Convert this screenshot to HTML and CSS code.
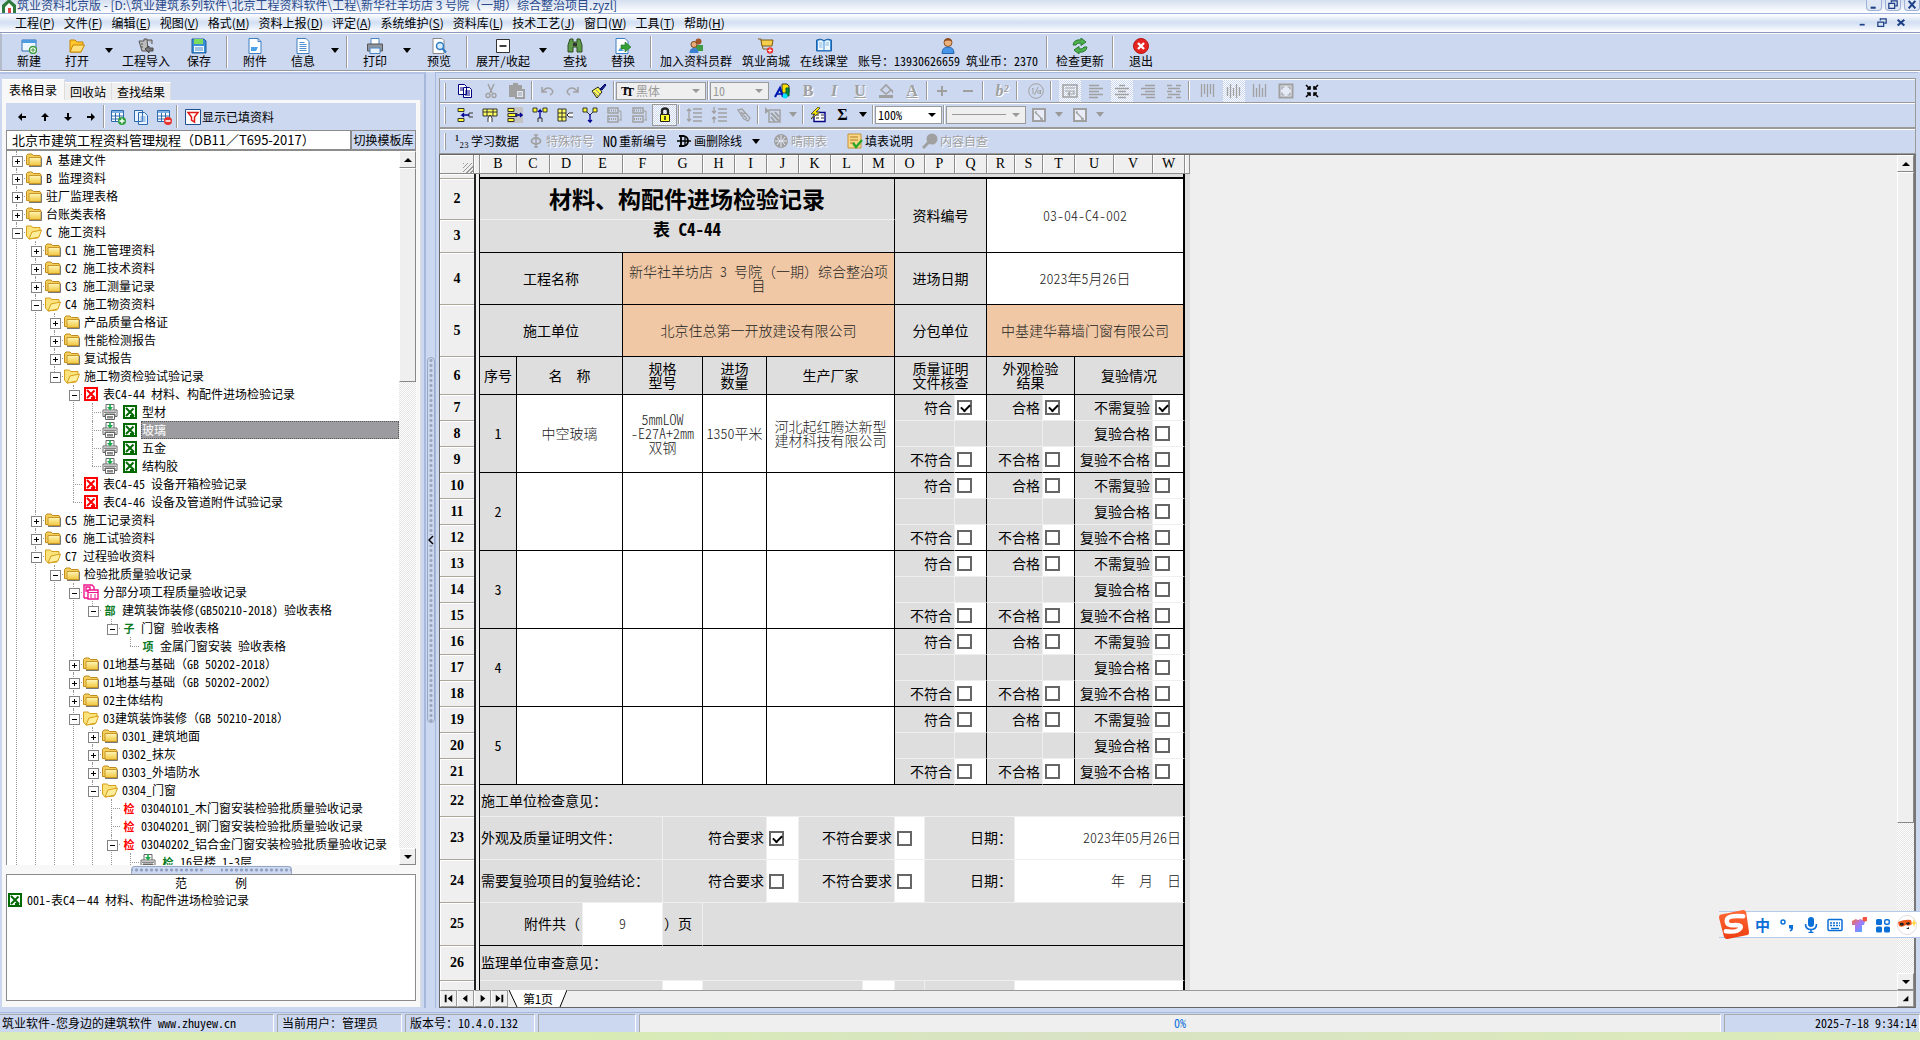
FILE: index.html
```html
<!DOCTYPE html>
<html lang="zh-CN">
<head>
    <meta charset="UTF-8">
    <meta name="viewport" content="width=device-width, initial-scale=1.0">
    <title>筑业资料北京版</title>
    <link rel="stylesheet" href="styles.css">
</head>
<body>

<!-- icon sprite -->
<svg class="sprite" aria-hidden="true">
    <defs>
        <linearGradient id="gold" x1="0" y1="0" x2="0" y2="1"><stop offset="0" stop-color="#fff6b8"/><stop offset="1" stop-color="#f0c63c"/></linearGradient>
        <linearGradient id="shirt" x1="0" y1="0" x2="1" y2="1"><stop offset="0" stop-color="#ff6a3c"/><stop offset=".5" stop-color="#a07bff"/><stop offset="1" stop-color="#38b6ff"/></linearGradient>
        <linearGradient id="sogou" x1="0" y1="0" x2="0" y2="1"><stop offset="0" stop-color="#ff6b35"/><stop offset="1" stop-color="#ee3f12"/></linearGradient>
    </defs>
    <symbol id="folder" viewBox="0 0 16 16"><path d="M.5 12.500V3.500L2 2h4l1.500 1.500H14l1 1.500v8z" fill="#f3cf5c" stroke="#c08a1c"/><path d="M3 5.500h12V13.500H3z" fill="url(#gold)" stroke="#c9962a"/><path d="M3 14.500h12.500V6" fill="none" stroke="#777"/></symbol>
    <symbol id="open" viewBox="0 0 16 16"><path d="M.5 2h5l1 1.500H14v3L12 14 3 15 .5 12z" fill="#fbe27a" stroke="#d6a01c"/><path d="M3 15L6 8l9.500-2L13 13z" fill="#ffef9c" stroke="#d6a01c"/></symbol>
    <symbol id="xred" viewBox="0 0 16 16"><path fill="#f00" d="M1 1h14v14H1z"/><path fill="#fff" d="M3 3h10v10H3z"/><path d="M4 4l8 8M11.500 4.500L4 12M8 12h4" stroke="#f00" stroke-width="2"/></symbol>
    <symbol id="xgreen" viewBox="0 0 16 16"><path fill="#006a00" d="M1 1h14v14H1z"/><path fill="#fff" d="M3 3h10v10H3z"/><path d="M4 4l8 8M11.500 4.500L4 12M8 12h4" stroke="#006a00" stroke-width="2"/></symbol>
    <symbol id="prn" viewBox="0 0 16 16"><path d="M4 6V.5h8V6M1 6h14v6.500h-2V10H3v2.500H1zM3.500 10.500h9v5h-9z" fill="#fff" stroke="#666"/><path d="M2 7.500h12V9H2zM5 12h6v2.500H5z" fill="#888"/><path d="M7.200 0h1.600v3H11L8 6.500 5 3h2.200z" fill="#1cab4c"/></symbol>
    <symbol id="pink" viewBox="0 0 16 16"><path d="M1 14V1h8l2 2v3M1 14h4M3 3h4v4H3z" fill="none" stroke="#f0148c" stroke-width="1.400"/><path d="M5 6h10v9H5z" fill="#fff" stroke="#f0148c" stroke-width="1.400"/><path d="M5 8.500h10M7 11h2M11 11h2M7 13h2M11 13h2" stroke="#f0148c"/></symbol>

    <symbol id="new" viewBox="0 0 16 16"><path d="M1 2h14v11H1z" fill="#eef6ff" stroke="#2f6fb5"/><path d="M1 2h14v3H1z" fill="#4d9be0"/><circle cx="12" cy="12" r="3.500" fill="#fff" stroke="#3c9a3c" stroke-width="1.500"/><path d="M12 10v4M10 12h4" stroke="#3c9a3c"/></symbol>
    <symbol id="openbig" viewBox="0 0 16 16"><path d="M1 2h5l2 2h6v3l-2 7H1z" fill="#ffc62e" stroke="#c78500"/><path d="M1 14l3-7h11.500L12 14z" fill="#ffe07a" stroke="#c78500"/></symbol>
    <symbol id="import" viewBox="0 0 16 16"><path d="M1 3h5V1h3l1 12H4zM9 2h5v4M3 6h2M3 9h2" fill="#bbb" stroke="#555"/><path d="M7 11l4-3v2h4v3h-4v2z" fill="#777" stroke="#444"/></symbol>
    <symbol id="save" viewBox="0 0 16 16"><path d="M1 1h12l2 2v12H1z" fill="#3a8fd8" stroke="#1d5fa0"/><path d="M3 1h9v5H3z" fill="#7fdc5a"/><path d="M3 8h10v6H3z" fill="#f4f8ff"/><path d="M4 10h8M4 12h8" stroke="#4a8ccc"/></symbol>
    <symbol id="doc" viewBox="0 0 16 16"><path d="M2 .5h9l3 3v12H2z" fill="#fff" stroke="#3f7fc1"/><path d="M11 .5v3h3" fill="none" stroke="#3f7fc1"/><path d="M4 9h7l-2 4H4z" fill="#4aa1e8"/></symbol>
    <symbol id="info" viewBox="0 0 16 16"><path d="M2 .5h9l3 3v12H2z" fill="#fff" stroke="#3f7fc1"/><path d="M4.500 4.500h5M4.500 6.500h7M4.500 8.500h7M4.500 10.500h7M4.500 12.500h7" stroke="#4d8fd0"/></symbol>
    <symbol id="print" viewBox="0 0 16 16"><path d="M4 6V.5h8V6" fill="#fff" stroke="#4a86c5"/><path d="M.5 6h15v7H.5z" fill="#8f959c" stroke="#555"/><path d="M3 10h10v5.500H3z" fill="#e8f2fc" stroke="#4a86c5"/></symbol>
    <symbol id="preview" viewBox="0 0 16 16"><path d="M2 .5h9l2 2v13H2z" fill="#fff" stroke="#888"/><circle cx="9" cy="8" r="3.500" fill="#d8ecff" stroke="#2f7cc4" stroke-width="1.500"/><path d="M11.500 10.500l3.500 4" stroke="#2f7cc4" stroke-width="2"/></symbol>
    <symbol id="fold" viewBox="0 0 16 16"><path d="M1.500 1.500h13v13h-13z" fill="#fff" stroke="#333"/><path d="M4.500 8h7" stroke="#000" stroke-width="1.500"/></symbol>
    <symbol id="find" viewBox="0 0 16 16"><path d="M3 1h3v3h4V1h3l2 6v7h-5V9H6v5H1V7z" fill="#5f9a4a" stroke="#2f4f25"/><path d="M6 5h4v3H6z" fill="#333"/></symbol>
    <symbol id="replace" viewBox="0 0 16 16"><path d="M1 .5h9l3 3v12H1z" fill="#fff" stroke="#3f7fc1"/><path d="M3 13l2-3 4 3z" fill="#4aa1e8"/><path d="M6 7h4V4l6 5-6 5v-3H6z" fill="#35a035" stroke="#1c6e1c" stroke-width=".6"/></symbol>
    <symbol id="group" viewBox="0 0 16 16"><circle cx="10.500" cy="3.500" r="3" fill="#a5552a"/><path d="M7 7h8v6H8z" fill="#3f9c46"/><circle cx="6" cy="6.500" r="3" fill="#e9ab78" stroke="#7a451c"/><path d="M1.500 15q0-5 4.500-5t4.500 5z" fill="#3a7fd0"/></symbol>
    <symbol id="shop" viewBox="0 0 16 16"><path d="M0 1h3l2 10h8" fill="none" stroke="#7c5a14"/><path d="M3 2h12l-1 6H4z" fill="#f6cf4a" stroke="#7c5a14"/><circle cx="12" cy="12.500" r="3.200" fill="#e33"/><path d="M12 10.700v3.600M10.200 12.500h3.600" stroke="#fff"/></symbol>
    <symbol id="book" viewBox="0 0 16 16"><path d="M.5 2q4-2 7.500.5Q12 0 15.500 2v11H.5z" fill="#3f90dc" stroke="#1f62a6"/><path d="M2 3q3-1.500 5.500.5V12H2zM8.500 3.500Q11 1.500 14 3v9H8.500z" fill="#eef7ff"/><path d="M3 5h3.500M3 7h3.500M3 9h3.500M9.500 5H13M9.500 7H13" stroke="#8bb8e0"/></symbol>
    <symbol id="user" viewBox="0 0 16 16"><circle cx="8" cy="4.500" r="4" fill="#edb27c" stroke="#8a4d1e"/><path d="M4 3.500q1-3 4-3t4 3q-4-2-8 0z" fill="#8a4d1e"/><path d="M2 15.500Q2 9 8 9t6 6.500z" fill="#4795e8" stroke="#2465ac"/></symbol>
    <symbol id="refresh" viewBox="0 0 16 16"><path d="M1 7q1-6 8-5V0l5 4-5 3.500V5Q5 4.500 4 7z" fill="#4fb050" stroke="#267a2b"/><path d="M15 9q-1 6-8 5v2l-5-4 5-3.500V11q4 .5 5-2z" fill="#4fb050" stroke="#267a2b"/></symbol>
    <symbol id="exit" viewBox="0 0 16 16"><circle cx="8" cy="8" r="7.500" fill="#e5231f" stroke="#b51512"/><path d="M5 5l6 6M11 5l-6 6" stroke="#fff" stroke-width="2.400"/></symbol>

    <symbol id="left" viewBox="0 0 16 16"><path d="M4 8l4-4v3h4v2H8v3z"/></symbol>
    <symbol id="up" viewBox="0 0 16 16"><path d="M8 4l4 4H9v4H7V8H4z"/></symbol>
    <symbol id="down" viewBox="0 0 16 16"><path d="M8 12l4-4H9V4H7v4H4z"/></symbol>
    <symbol id="right" viewBox="0 0 16 16"><path d="M12 8L8 4v3H4v2h4v3z"/></symbol>
    <symbol id="tadd" viewBox="0 0 16 16"><path d="M1.500 1.500h12v11h-12z" fill="#fff" stroke="#2c6ab0"/><path d="M2 2h11v2H2z" fill="#7eb0e4"/><path d="M2 7h11M2 10h11M5.500 4v8M9.500 4v8" stroke="#2c6ab0"/><circle cx="12" cy="12" r="4" fill="#2e9d3c"/><path d="M12 9.500v5M9.500 12h5" stroke="#fff" stroke-width="1.400"/></symbol>
    <symbol id="tdel" viewBox="0 0 16 16"><path d="M1.500 1.500h12v11h-12z" fill="#fff" stroke="#2c6ab0"/><path d="M2 2h11v2H2z" fill="#7eb0e4"/><path d="M2 7h11M2 10h11M5.500 4v8M9.500 4v8" stroke="#2c6ab0"/><circle cx="12" cy="12" r="4" fill="#e8332c"/><path d="M9.500 12h5" stroke="#fff" stroke-width="1.600"/></symbol>
    <symbol id="tcopy" viewBox="0 0 16 16"><path d="M1.500 1.500h8v11h-8zM5.500 3.500h6l3 3v9h-9z" fill="#eaf3ff" stroke="#2c6ab0"/><path d="M7.500 8h5M7.500 10h5M7.500 12h5" stroke="#5c94d2"/></symbol>
    <symbol id="filter" viewBox="0 0 16 16"><path d="M.5.500h15v15H.5z" fill="#fff" stroke="#1d4f8f"/><path d="M3 3.500h10L9.500 8v5l-3-2V8z" fill="#fff" stroke="#e01818" stroke-width="1.500"/></symbol>

    <symbol id="copy" viewBox="0 0 16 16"><path d="M1.500 1.500h6l2 2v8h-8zM6.500 4.500h6l2 2v8h-8z" fill="#fff" stroke="#000080"/><path d="M3 5h3M3 7h3M8 8h5M8 10h5M8 12h5" stroke="#000080"/></symbol>
    <symbol id="cut" viewBox="0 0 16 16"><path d="M5 1l4 9M11 1L7 10" stroke="currentColor" stroke-width="1.500"/><circle cx="5" cy="12.500" r="2" fill="none" stroke="currentColor" stroke-width="1.300"/><circle cx="11" cy="12.500" r="2" fill="none" stroke="currentColor" stroke-width="1.300"/></symbol>
    <symbol id="paste" viewBox="0 0 16 16"><path d="M0 2h4V0h5v2h4v4h3v10H6v-2H0z" fill="currentColor"/><path d="M8 8h6v6H8z" fill="#dfe6f4"/><path d="M9 10h4M9 12h4" stroke="currentColor"/></symbol>
    <symbol id="undo" viewBox="0 0 16 16"><path d="M3 4v5h5M3 9q5-6 9-3t-1 6" fill="none" stroke="currentColor" stroke-width="1.500"/></symbol>
    <symbol id="redo" viewBox="0 0 16 16"><path d="M13 4v5H8M13 9Q8 3 4 6t1 6" fill="none" stroke="currentColor" stroke-width="1.500"/></symbol>
    <symbol id="brush" viewBox="0 0 16 16"><path d="M1 8l6-4 4 5-5 6z" fill="#ffff50" stroke="#222"/><path d="M3 9l4 4M5 7l4 4" stroke="#888"/><path d="M9 6l5-5 1 1-4 5z" fill="#1b2a90" stroke="#000060"/></symbol>
    <symbol id="color" viewBox="0 0 16 16"><path d="M8 1h5l2 2v7H8z" fill="#ffe000" stroke="#333"/><path d="M12 5h3v8h-3z" fill="#0a8a3a" stroke="#063"/><path d="M1 14L6 5l3 9" fill="none" stroke="#0018b0" stroke-width="2.200"/><path d="M3 11h5" stroke="#0018b0" stroke-width="1.600"/><circle cx="11" cy="13" r="2.500" fill="#00e0ff"/></symbol>
    <symbol id="fill" viewBox="0 0 16 16"><path d="M3 7l5-5 5 5-5 4z" fill="none" stroke="currentColor" stroke-width="1.600"/><path d="M1 12h14v3H1zM12 6l3 1v4z" fill="currentColor"/></symbol>
    <symbol id="plus" viewBox="0 0 16 16"><path d="M8 3v10M3 8h10" stroke="currentColor" stroke-width="2"/></symbol>
    <symbol id="minus" viewBox="0 0 16 16"><path d="M3 8h10" stroke="currentColor" stroke-width="2"/></symbol>
    <symbol id="frac" viewBox="0 0 16 16"><circle cx="8" cy="8" r="7.300" fill="none" stroke="currentColor"/><path d="M4 6l1-1v6M10 4L6.500 12M12.500 7v4M12.500 8q-3-1-3 1t3 1" fill="none" stroke="currentColor"/></symbol>
    <symbol id="wrap" viewBox="0 0 16 16"><path d="M1 2h14v12H1z" fill="none" stroke="currentColor" stroke-width="1.500"/><path d="M3 5h10M3 8h9v3H7M8 9l-2 2 2 2" fill="none" stroke="currentColor" stroke-width="1.200"/></symbol>
    <symbol id="al" viewBox="0 0 16 16"><path d="M1 2.500h10M1 5.500h14M1 8.500h10M1 11.500h14M1 14.500h9" stroke="currentColor" stroke-width="1.500"/></symbol>
    <symbol id="ac" viewBox="0 0 16 16"><path d="M5 2.500h6M1 5.500h14M4 8.500h8M1 11.500h14M4 14.500h8" stroke="currentColor" stroke-width="1.500"/></symbol>
    <symbol id="ar" viewBox="0 0 16 16"><path d="M5 2.500h10M1 5.500h14M5 8.500h10M1 11.500h14M6 14.500h9" stroke="currentColor" stroke-width="1.500"/></symbol>
    <symbol id="aj" viewBox="0 0 16 16"><path d="M1 2.500h5M10 2.500h5M2 5.500h12M1 8.500h5M10 8.500h5M2 11.500h12M1 14.500h5M10 14.500h5" stroke="currentColor" stroke-width="1.500"/></symbol>
    <symbol id="vt" viewBox="0 0 16 16"><path d="M1.500 1v13M4.500 1v10M7.500 1v13M10.500 1v10M13.500 1v13" stroke="currentColor" stroke-width="1.300"/></symbol>
    <symbol id="vm" viewBox="0 0 16 16"><path d="M1.500 4v9M4.500 1v14M7.500 5v8M10.500 1v14M13.500 4v9" stroke="currentColor" stroke-width="1.300"/></symbol>
    <symbol id="vb" viewBox="0 0 16 16"><path d="M1.500 1v13M4.500 5v9M7.500 1v13M10.500 5v9M13.500 1v13" stroke="currentColor" stroke-width="1.300"/></symbol>
    <symbol id="expand" viewBox="0 0 16 16"><path d="M1.500 1.500h13v13h-13z" fill="#e4eaf6" stroke="currentColor" stroke-width="2"/><path d="M4 6.500V4h2.500M9.500 4H12v2.500M12 9.500V12H9.500M6.500 12H4V9.500" fill="none" stroke="currentColor" stroke-width="1.200"/></symbol>
    <symbol id="shrink" viewBox="0 0 16 16"><path d="M2 2l4 4M14 2l-4 4M2 14l4-4M14 14l-4-4M6 3v3H3M10 3v3h3M6 13v-3H3M10 13v-3h3" fill="none" stroke="#000" stroke-width="1.600"/></symbol>

    <symbol id="ins1" viewBox="0 0 16 16"><path d="M1 1.500h6v3H1zM1 11.500h6v3H1z" fill="#ffff30" stroke="#333"/><path d="M16 6h-4v4h4" fill="none" stroke="#333"/><path d="M12 8H5l2-2M5 8l2 2" fill="none" stroke="#000090" stroke-width="1.300"/></symbol>
    <symbol id="ins2" viewBox="0 0 16 16"><path d="M1 2h14v7H1z" fill="#ffff60" stroke="#333"/><path d="M1 5h14M5 2v7M11 2v7" stroke="#333"/><path d="M6 15v-4l2-3 2 3v4" fill="#fff" stroke="#333"/></symbol>
    <symbol id="ins3" viewBox="0 0 16 16"><path d="M1 1.500h6v3H1zM1 11.500h6v3H1zM1 6.500h9v3H1z" fill="#ffff30" stroke="#333"/><path d="M8 8h7l-2-2M15 8l-2 2" fill="none" stroke="#000090" stroke-width="1.300"/></symbol>
    <symbol id="ins4" viewBox="0 0 16 16"><path d="M1 1h4v4H1zM11 1h4v4h-4z" fill="#ffff30" stroke="#333"/><path d="M6 15v-4h4v4" fill="none" stroke="#333"/><path d="M8 11V3L6 5M8 3l2 2" fill="none" stroke="#000090" stroke-width="1.300"/></symbol>
    <symbol id="ins5" viewBox="0 0 16 16"><path d="M1 2h8v12H1z" fill="#ffff60" stroke="#333"/><path d="M5 2v12M1 6h8M1 10h8" stroke="#333"/><path d="M16 6h-4l-2 2 2 2h4" fill="#fff" stroke="#333"/></symbol>
    <symbol id="ins6" viewBox="0 0 16 16"><path d="M1 1h4v4H1zM11 1h4v4h-4z" fill="#ffff30" stroke="#333"/><path d="M5 5l3 3 3-3" fill="none" stroke="#333"/><path d="M8 7v8l-2-2M8 15l2-2" fill="none" stroke="#000090" stroke-width="1.300"/></symbol>
    <symbol id="blk" viewBox="0 0 16 16"><path d="M1 1h10v5H1zM1 9h10v6H1z" fill="none" stroke="currentColor" stroke-width="1.500"/><path d="M2 3.500h8M2 12h8" stroke="currentColor" stroke-width="2" stroke-dasharray="1 1"/><path d="M12 4h2v9M12 13h3" fill="none" stroke="currentColor"/></symbol>
    <symbol id="lock" viewBox="0 0 16 16"><path d="M5 7V4q0-2.500 3-2.500T11 4v3" fill="none" stroke="#222" stroke-width="2.400"/><path d="M3.500 7.500h9v7h-9z" fill="#ffff30" stroke="#222"/><path d="M8 9v4" stroke="#222" stroke-width="1.600"/></symbol>
    <symbol id="lines" viewBox="0 0 16 16"><path d="M7 2h9M7 6h9M7 10h9M7 14h9M3 2v12M1 4l2-2 2 2M1 12l2 2 2-2" fill="none" stroke="currentColor" stroke-width="1.300"/></symbol>
    <symbol id="lines2" viewBox="0 0 16 16"><path d="M7 2h9M7 6h9M7 10h9M7 14h9M3 0v6M3 16v-6M1 4l2 2 2-2M1 12l2-2 2 2" fill="none" stroke="currentColor" stroke-width="1.300"/></symbol>
    <symbol id="chain" viewBox="0 0 16 16"><path d="M2 3l4-1 8 9-2 3-4-2zM5 5l6 7M9 5l-4 4" fill="none" stroke="currentColor" stroke-width="1.300"/></symbol>
    <symbol id="grad" viewBox="0 0 16 16"><path d="M0 0l4 4-4 3z" fill="currentColor"/><path d="M4 3h11v12H4z" fill="none" stroke="currentColor" stroke-width="1.500"/><path d="M6 6l8 8M10 5l4 5M6 10l4 5" stroke="currentColor" stroke-width="2"/></symbol>
    <symbol id="calc" viewBox="0 0 16 16"><path d="M4 5.500h11v9H4z" fill="#fff" stroke="#000080" stroke-width="1.400"/><path d="M6 8h3M6 11h3M11 8h3M11 11h3" stroke="#333"/><path d="M8 0L1 7h4l-4 5 9-7H6l4-4z" fill="#ffe800" stroke="#333" stroke-width=".8"/></symbol>
    <symbol id="cellb" viewBox="0 0 16 16"><path d="M2 2h12v12H2z" fill="#e8edf7" stroke="currentColor" stroke-width="2"/><path d="M4 5l7 7M9 12h3M5 4v3" stroke="currentColor" stroke-width="1.300"/></symbol>
    <symbol id="phi" viewBox="0 0 16 16"><path d="M8 2v12M6 2h4M6 14h4" stroke="currentColor" stroke-width="1.500"/><ellipse cx="8" cy="8" rx="4.500" ry="3" fill="none" stroke="currentColor" stroke-width="1.800"/></symbol>
    <symbol id="strike" viewBox="0 0 16 16"><path d="M5 3v10M3 3h5q4 1 4 5t-4 5H3" fill="none" stroke="#000" stroke-width="1.800"/><path d="M1 8h14M9 4v8" stroke="#000" stroke-width="1.300"/></symbol>
    <symbol id="globe" viewBox="0 0 16 16"><circle cx="8" cy="8" r="7" fill="currentColor"/><path d="M4 4l3 4-3 4M12 4L9 8l3 4M8 2v12M2 8h12" fill="none" stroke="#e6ecf8"/></symbol>
    <symbol id="note" viewBox="0 0 16 16"><path d="M1 1h13v14H1z" fill="#fbd98a" stroke="#c39237"/><path d="M3 4h8M3 7h8M3 10h5" stroke="#b07a1c"/><path d="M6 10l3 4 6-7" fill="none" stroke="#2ba52b" stroke-width="2.400"/></symbol>
    <symbol id="mag" viewBox="0 0 16 16"><circle cx="10" cy="6" r="5.500" fill="currentColor"/><path d="M7 9l-6 6" stroke="currentColor" stroke-width="3"/></symbol>
</svg>

<header class="titlebar">
    <svg class="ic" viewBox="0 0 16 16"><path d="M1 6l7-6 7 6v9H1z" fill="#2e7a3c"/><path d="M4 8l4-4 4 4v7H4z" fill="#fff"/><path d="M7 9h3v6H7z" fill="#d44"/></svg>
    <span class="caption">筑业资料北京版 - [D:\筑业建筑系列软件\北京工程资料软件\工程\新华社羊坊店 3 号院（一期）综合整治项目.zyzl]</span>
    <div class="winbtns">
        <button aria-label="最小化"><svg viewBox="0 0 12 12"><path d="M2 8h6v2.500H2z" fill="#1d3f86"/></svg></button>
        <button aria-label="还原"><svg viewBox="0 0 12 12"><path d="M4 3V1h7v6H9M1 4h7v6H1z" fill="none" stroke="#1d3f86" stroke-width="1.500"/></svg></button>
        <button aria-label="关闭"><svg viewBox="0 0 12 12"><path d="M2 1l8 9M10 1L2 10" stroke="#1d3f86" stroke-width="2.500"/></svg></button>
    </div>
</header>

<nav class="menubar">
    <button>工程(<u>P</u>)</button>
    <button>文件(<u>F</u>)</button>
    <button>编辑(<u>E</u>)</button>
    <button>视图(<u>V</u>)</button>
    <button>格式(<u>M</u>)</button>
    <button>资料上报(<u>D</u>)</button>
    <button>评定(<u>A</u>)</button>
    <button>系统维护(<u>S</u>)</button>
    <button>资料库(<u>L</u>)</button>
    <button>技术工艺(<u>J</u>)</button>
    <button>窗口(<u>W</u>)</button>
    <button>工具(<u>T</u>)</button>
    <button>帮助(<u>H</u>)</button>
    <div class="mdibtns">
        <button aria-label="最小化"><svg viewBox="0 0 12 12"><path d="M2 7h6v2H2z" fill="#1d3f86"/></svg></button>
        <button aria-label="还原"><svg viewBox="0 0 12 12"><path d="M4 3V1h7v5H9M1 5h7v5H1z" fill="none" stroke="#1d3f86" stroke-width="1.500"/></svg></button>
        <button aria-label="关闭"><svg viewBox="0 0 12 12"><path d="M2 2l8 7M10 2L2 9" stroke="#1d3f86" stroke-width="2.500"/></svg></button>
    </div>
</nav>

<div class="maintools">
    <button><svg class="ic"><use href="#new"/></svg>新建</button>
    <button><svg class="ic"><use href="#openbig"/></svg>打开</button>
    <button class="drop" aria-label="打开列表"></button>
    <button><svg class="ic"><use href="#import"/></svg>工程导入</button>
    <button><svg class="ic"><use href="#save"/></svg>保存</button>
    <i class="sep"></i>
    <button><svg class="ic"><use href="#doc"/></svg>附件</button>
    <button><svg class="ic"><use href="#info"/></svg>信息</button>
    <button class="drop" aria-label="信息列表"></button>
    <i class="sep"></i>
    <button><svg class="ic"><use href="#print"/></svg>打印</button>
    <button class="drop" aria-label="打印列表"></button>
    <button><svg class="ic"><use href="#preview"/></svg>预览</button>
    <i class="sep"></i>
    <button><svg class="ic"><use href="#fold"/></svg>展开/收起</button>
    <button class="drop" aria-label="展开列表"></button>
    <button><svg class="ic"><use href="#find"/></svg>查找</button>
    <button><svg class="ic"><use href="#replace"/></svg>替换</button>
    <i class="sep"></i>
    <button><svg class="ic"><use href="#group"/></svg>加入资料员群</button>
    <button><svg class="ic"><use href="#shop"/></svg>筑业商城</button>
    <button><svg class="ic"><use href="#book"/></svg>在线课堂</button>
    <button><svg class="ic"><use href="#user"/></svg>账号：13930626659 筑业币：2370</button>
    <i class="sep"></i>
    <button><svg class="ic"><use href="#refresh"/></svg>检查更新</button>
    <i class="sep"></i>
    <button><svg class="ic"><use href="#exit"/></svg>退出</button>
</div>

<main class="workspace">
    <aside class="side">
        <div class="tabs">
            <button class="active">表格目录</button><button>回收站</button><button>查找结果</button>
        </div>
        <div class="page">
            <div class="sidetools">
                <button aria-label="左移"><svg class="ic"><use href="#left"/></svg></button>
                <button aria-label="上移"><svg class="ic"><use href="#up"/></svg></button>
                <button aria-label="下移"><svg class="ic"><use href="#down"/></svg></button>
                <button aria-label="右移"><svg class="ic"><use href="#right"/></svg></button>
                <i class="sep"></i>
                <button aria-label="添加表格"><svg class="ic"><use href="#tadd"/></svg></button>
                <button aria-label="复制表格"><svg class="ic"><use href="#tcopy"/></svg></button>
                <button aria-label="删除表格"><svg class="ic"><use href="#tdel"/></svg></button>
                <i class="sep"></i>
                <button class="wide"><svg class="ic"><use href="#filter"/></svg>显示已填资料</button>
            </div>
            <div class="library">
                <input type="text" aria-label="模板库" value="北京市建筑工程资料管理规程（DB11／T695-2017）" readonly>
                <button>切换模板库</button>
            </div>

            <div class="treebox">
                <ul class="tree">
                    <li class="plus"><span><svg class="ic"><use href="#folder"/></svg>A 基建文件</span></li>
                    <li class="plus"><span><svg class="ic"><use href="#folder"/></svg>B 监理资料</span></li>
                    <li class="plus"><span><svg class="ic"><use href="#folder"/></svg>驻厂监理表格</span></li>
                    <li class="plus"><span><svg class="ic"><use href="#folder"/></svg>台账类表格</span></li>
                    <li class="minus"><span><svg class="ic"><use href="#open"/></svg>C 施工资料</span>
                        <ul>
                            <li class="plus"><span><svg class="ic"><use href="#folder"/></svg>C1 施工管理资料</span></li>
                            <li class="plus"><span><svg class="ic"><use href="#folder"/></svg>C2 施工技术资料</span></li>
                            <li class="plus"><span><svg class="ic"><use href="#folder"/></svg>C3 施工测量记录</span></li>
                            <li class="minus"><span><svg class="ic"><use href="#open"/></svg>C4 施工物资资料</span>
                                <ul>
                                    <li class="plus"><span><svg class="ic"><use href="#folder"/></svg>产品质量合格证</span></li>
                                    <li class="plus"><span><svg class="ic"><use href="#folder"/></svg>性能检测报告</span></li>
                                    <li class="plus"><span><svg class="ic"><use href="#folder"/></svg>复试报告</span></li>
                                    <li class="minus end"><span><svg class="ic"><use href="#open"/></svg>施工物资检验试验记录</span>
                                        <ul>
                                            <li class="minus"><span><svg class="ic"><use href="#xred"/></svg>表C4-44 材料、构配件进场检验记录</span>
                                                <ul>
                                                    <li><span><svg class="ic"><use href="#prn"/></svg><svg class="ic"><use href="#xgreen"/></svg>型材</span></li>
                                                    <li><span><svg class="ic"><use href="#prn"/></svg><svg class="ic"><use href="#xgreen"/></svg><b class="selected">玻璃</b></span></li>
                                                    <li><span><svg class="ic"><use href="#prn"/></svg><svg class="ic"><use href="#xgreen"/></svg>五金</span></li>
                                                    <li class="end"><span><svg class="ic"><use href="#prn"/></svg><svg class="ic"><use href="#xgreen"/></svg>结构胶</span></li>
                                                </ul>
                                            </li>
                                            <li><span><svg class="ic"><use href="#xred"/></svg>表C4-45 设备开箱检验记录</span></li>
                                            <li class="end"><span><svg class="ic"><use href="#xred"/></svg>表C4-46 设备及管道附件试验记录</span></li>
                                        </ul>
                                    </li>
                                </ul>
                            </li>
                            <li class="plus"><span><svg class="ic"><use href="#folder"/></svg>C5 施工记录资料</span></li>
                            <li class="plus"><span><svg class="ic"><use href="#folder"/></svg>C6 施工试验资料</span></li>
                            <li class="minus"><span><svg class="ic"><use href="#open"/></svg>C7 过程验收资料</span>
                                <ul>
                                    <li class="minus"><span><svg class="ic"><use href="#folder"/></svg>检验批质量验收记录</span>
                                        <ul>
                                            <li class="minus"><span><svg class="ic"><use href="#pink"/></svg>分部分项工程质量验收记录</span>
                                                <ul>
                                                    <li class="minus end"><span><em>部</em>建筑装饰装修(GB50210-2018) 验收表格</span>
                                                        <ul>
                                                            <li class="minus end"><span><em>子</em>门窗 验收表格</span>
                                                                <ul>
                                                                    <li class="end"><span><em>项</em>金属门窗安装 验收表格</span></li>
                                                                </ul>
                                                            </li>
                                                        </ul>
                                                    </li>
                                                </ul>
                                            </li>
                                            <li class="plus"><span><svg class="ic"><use href="#folder"/></svg><b>01地基与基础<i class="fw">（</i>GB 50202-2018<i class="fw">）</i></b></span></li>
                                            <li class="plus"><span><svg class="ic"><use href="#folder"/></svg><b>01地基与基础<i class="fw">（</i>GB 50202-2002<i class="fw">）</i></b></span></li>
                                            <li class="plus"><span><svg class="ic"><use href="#folder"/></svg>02主体结构</span></li>
                                            <li class="minus"><span><svg class="ic"><use href="#open"/></svg><b>03建筑装饰装修<i class="fw">（</i>GB 50210-2018<i class="fw">）</i></b></span>
                                                <ul>
                                                    <li class="plus"><span><svg class="ic"><use href="#folder"/></svg>0301_建筑地面</span></li>
                                                    <li class="plus"><span><svg class="ic"><use href="#folder"/></svg>0302_抹灰</span></li>
                                                    <li class="plus"><span><svg class="ic"><use href="#folder"/></svg>0303_外墙防水</span></li>
                                                    <li class="minus"><span><svg class="ic"><use href="#open"/></svg>0304_门窗</span>
                                                        <ul>
                                                            <li><span><em class="red">检</em>03040101_木门窗安装检验批质量验收记录</span></li>
                                                            <li><span><em class="red">检</em>03040201_钢门窗安装检验批质量验收记录</span></li>
                                                            <li class="minus"><span><em class="red">检</em>03040202_铝合金门窗安装检验批质量验收记录</span>
                                                                <ul>
                                                                    <li><span><svg class="ic"><use href="#prn"/></svg><em>检</em>16号楼 1-3层</span></li>
                                                                </ul>
                                                            </li>
                                                        </ul>
                                                    </li>
                                                </ul>
                                            </li>
                                        </ul>
                                    </li>
                                </ul>
                            </li>
                        </ul>
                    </li>
                </ul>
                <div class="scroll">
                    <button class="arrow-up" aria-label="向上滚动"></button>
                    <div class="thumb tree-thumb"></div>
                    <button class="arrow-down" aria-label="向下滚动"></button>
                </div>
            </div>

            <div class="hgrip"><i></i></div>

            <div class="samples">
                <h2><span>范</span><span>例</span></h2>
                <p><svg class="ic"><use href="#xgreen"/></svg><span>001-表C4<i class="fw">－</i>44 材料、构配件进场检验记录</span></p>
            </div>
        </div>
    </aside>

    <div class="splitter"><i><svg viewBox="0 0 6 10"><path d="M5 1L1 5l4 4" fill="none" stroke="#000" stroke-width="1.500"/></svg></i></div>

    <section class="editor">
        <div class="bar first">
            <button aria-label="复制"><svg class="ic"><use href="#copy"/></svg></button>
            <button disabled aria-label="剪切"><svg class="ic"><use href="#cut"/></svg></button>
            <button disabled aria-label="粘贴"><svg class="ic"><use href="#paste"/></svg></button>
            <i class="sep"></i>
            <button disabled aria-label="撤销"><svg class="ic"><use href="#undo"/></svg></button>
            <button disabled aria-label="重做"><svg class="ic"><use href="#redo"/></svg></button>
            <button aria-label="格式刷"><svg class="ic"><use href="#brush"/></svg></button>
            <i class="sep"></i>
            <div class="combo font"><b>T</b><b class="low">T</b><select disabled aria-label="字体"><option>黑体</option></select></div>
            <i class="sep"></i>
            <div class="combo size"><select disabled aria-label="字号"><option>10</option></select></div>
            <button aria-label="颜色"><svg class="ic"><use href="#color"/></svg></button>
            <button disabled class="glyph"><b>B</b></button>
            <button disabled class="glyph"><b><em>I</em></b></button>
            <button disabled class="glyph"><b><u>U</u></b></button>
            <button disabled aria-label="填充"><svg class="ic"><use href="#fill"/></svg></button>
            <button disabled class="glyph"><b><u>A</u></b></button>
            <i class="sep"></i>
            <button disabled aria-label="增大"><svg class="ic"><use href="#plus"/></svg></button>
            <button disabled aria-label="减小"><svg class="ic"><use href="#minus"/></svg></button>
            <i class="sep big"></i>
            <button disabled class="glyph"><b><em>b²</em></b></button>
            <i class="sep big"></i>
            <button disabled aria-label="分数"><svg class="ic"><use href="#frac"/></svg></button>
            <i class="sep big"></i>
            <button disabled class="on" aria-label="自动换行"><svg class="ic"><use href="#wrap"/></svg></button>
            <button disabled aria-label="左对齐"><svg class="ic"><use href="#al"/></svg></button>
            <button disabled class="on" aria-label="居中"><svg class="ic"><use href="#ac"/></svg></button>
            <button disabled aria-label="右对齐"><svg class="ic"><use href="#ar"/></svg></button>
            <button disabled aria-label="分散对齐"><svg class="ic"><use href="#aj"/></svg></button>
            <i class="sep big"></i>
            <button disabled aria-label="上对齐"><svg class="ic"><use href="#vt"/></svg></button>
            <button disabled class="on" aria-label="垂直居中"><svg class="ic"><use href="#vm"/></svg></button>
            <button disabled aria-label="下对齐"><svg class="ic"><use href="#vb"/></svg></button>
            <button disabled aria-label="放大"><svg class="ic"><use href="#expand"/></svg></button>
            <button aria-label="缩小"><svg class="ic"><use href="#shrink"/></svg></button>
        </div>
        <div class="bar second">
            <button aria-label="插入行"><svg class="ic"><use href="#ins1"/></svg></button>
            <button aria-label="插入表"><svg class="ic"><use href="#ins2"/></svg></button>
            <button class="hover" aria-label="删除行"><svg class="ic"><use href="#ins3"/></svg></button>
            <button aria-label="插入列"><svg class="ic"><use href="#ins4"/></svg></button>
            <button aria-label="合并列"><svg class="ic"><use href="#ins5"/></svg></button>
            <button aria-label="删除列"><svg class="ic"><use href="#ins6"/></svg></button>
            <button disabled aria-label="合并"><svg class="ic"><use href="#blk"/></svg></button>
            <button disabled aria-label="拆分"><svg class="ic"><use href="#blk"/></svg></button>
            <button class="on pressed" aria-label="锁定"><svg class="ic"><use href="#lock"/></svg></button>
            <i class="sep"></i>
            <button disabled aria-label="行距增"><svg class="ic"><use href="#lines"/></svg></button>
            <button disabled aria-label="行距减"><svg class="ic"><use href="#lines2"/></svg></button>
            <button disabled aria-label="链接"><svg class="ic"><use href="#chain"/></svg></button>
            <i class="sep"></i>
            <button disabled aria-label="斜线"><svg class="ic"><use href="#grad"/></svg></button>
            <button disabled class="drop" aria-label="斜线列表"></button>
            <i class="sep"></i>
            <button aria-label="计算"><svg class="ic"><use href="#calc"/></svg></button>
            <button class="glyph"><b>Σ</b></button>
            <button class="drop" aria-label="求和列表"></button>
            <i class="sep"></i>
            <div class="combo zoom"><select aria-label="缩放"><option>100%</option></select></div>
            <i class="sep"></i>
            <div class="combo line"><hr><select disabled aria-label="线型"><option></option></select></div>
            <button disabled aria-label="边框"><svg class="ic"><use href="#cellb"/></svg></button>
            <button disabled class="drop" aria-label="边框列表"></button>
            <button disabled aria-label="清除边框"><svg class="ic"><use href="#cellb"/></svg></button>
            <button disabled class="drop" aria-label="清除列表"></button>
        </div>
        <div class="bar third">
            <button><span class="num">¹₂₃</span>学习数据</button>
            <button disabled><svg class="ic"><use href="#phi"/></svg>特殊符号</button>
            <button><span class="no">NO</span>重新编号</button>
            <button><svg class="ic"><use href="#strike"/></svg>画删除线</button>
            <button class="drop" aria-label="删除线列表"></button>
            <button disabled><svg class="ic"><use href="#globe"/></svg>晴雨表</button>
            <button class="gapl"><svg class="ic"><use href="#note"/></svg>填表说明</button>
            <button disabled><svg class="ic"><use href="#mag"/></svg>内容自查</button>
        </div>

        <div class="gridbox">
            <div class="grid">
                <table class="sheet">
                    <colgroup>
                        <col class="w34"><col class="w6"><col class="w37"><col class="w33"><col class="w33">
                        <col class="w40"><col class="w40"><col class="w40">
                        <col class="w32"><col class="w32"><col class="w32"><col class="w32"><col class="w32"><col class="w32">
                        <col class="w30"><col class="w30"><col class="w32">
                        <col class="w28"><col class="w28"><col class="w32">
                        <col class="w39"><col class="w39"><col class="w32"><col class="w5">
                    </colgroup>
                    <thead>
                        <tr>
                            <th class="corner"></th><th></th><th>B</th><th>C</th><th>D</th><th>E</th><th>F</th><th>G</th><th>H</th><th>I</th><th>J</th><th>K</th><th>L</th><th>M</th><th>O</th><th>P</th><th>Q</th><th>R</th><th>S</th><th>T</th><th>U</th><th>V</th><th>W</th><th></th>
                        </tr>
                    </thead>
                    <tbody>
                        <tr class="h5"><th></th><td class="edge"></td><td colspan="21" class="top"></td><td class="tail"></td></tr>
                        <tr class="h41"><th>2</th><td class="edge"></td>
                            <td colspan="12" class="title r">材料、构配件进场检验记录</td>
                            <td colspan="3" rowspan="2" class="k">资料编号</td>
                            <td colspan="6" rowspan="2" class="v k last">03-04-C4-002</td><td class="tail"></td></tr>
                        <tr class="h33"><th>3</th><td class="edge"></td>
                            <td colspan="12" class="subtitle k">表 C4-44</td><td class="tail"></td></tr>
                        <tr class="h52"><th>4</th><td class="edge"></td>
                            <td colspan="4" class="k">工程名称</td>
                            <td colspan="8" class="v peach k">新华社羊坊店 3 号院<i class="fw">（</i>一期<i class="fw">）</i>综合整治项目</td>
                            <td colspan="3" class="k">进场日期</td>
                            <td colspan="6" class="v k last">2023年5月26日</td><td class="tail"></td></tr>
                        <tr class="h52"><th>5</th><td class="edge"></td>
                            <td colspan="4" class="k">施工单位</td>
                            <td colspan="8" class="v peach k">北京住总第一开放建设有限公司</td>
                            <td colspan="3" class="k">分包单位</td>
                            <td colspan="6" class="v peach k last">中基建华幕墙门窗有限公司</td><td class="tail"></td></tr>
                        <tr class="h38"><th>6</th><td class="edge"></td>
                            <td class="k">序号</td>
                            <td colspan="3" class="k fw">名　称</td>
                            <td colspan="2" class="k">规格<br>型号</td>
                            <td colspan="2" class="k">进场<br>数量</td>
                            <td colspan="4" class="k">生产厂家</td>
                            <td colspan="3" class="k">质量证明<br>文件核查</td>
                            <td colspan="3" class="k">外观检验<br>结果</td>
                            <td colspan="3" class="k last">复验情况</td><td class="tail"></td></tr>
                    </tbody>
                    <tbody id="items"></tbody>
                    <tbody>
                        <tr class="h32"><th>22</th><td class="edge"></td><td colspan="21" class="lt last">施工单位检查意见：</td><td class="tail"></td></tr>
                        <tr class="h43"><th>23</th><td class="edge"></td>
                            <td colspan="5" class="lt">外观及质量证明文件：</td>
                            <td colspan="3" class="rt"><label for="ok1">符合要求</label></td>
                            <td class="c"><input type="checkbox" id="ok1" checked></td>
                            <td colspan="3" class="rt"><label for="no1">不符合要求</label></td>
                            <td class="c"><input type="checkbox" id="no1"></td>
                            <td colspan="3" class="rt">日期：</td>
                            <td colspan="5" class="v rt last">2023年05月26日</td><td class="tail"></td></tr>
                        <tr class="h43"><th>24</th><td class="edge"></td>
                            <td colspan="5" class="lt">需要复验项目的复验结论：</td>
                            <td colspan="3" class="rt"><label for="ok2">符合要求</label></td>
                            <td class="c"><input type="checkbox" id="ok2"></td>
                            <td colspan="3" class="rt"><label for="no2">不符合要求</label></td>
                            <td class="c"><input type="checkbox" id="no2"></td>
                            <td colspan="3" class="rt">日期：</td>
                            <td colspan="5" class="v rt fw last">年　月　日</td><td class="tail"></td></tr>
                        <tr class="h43"><th>25</th><td class="edge"></td>
                            <td colspan="3" class="rt fw b">附件共（</td>
                            <td colspan="2" class="v b">9</td>
                            <td class="lt fw b">）页</td>
                            <td colspan="15" class="b last"></td><td class="tail"></td></tr>
                        <tr class="h35"><th>26</th><td class="edge"></td><td colspan="21" class="lt last">监理单位审查意见：</td><td class="tail"></td></tr>
                        <tr class="h43"><th></th><td class="edge"></td>
                            <td colspan="5"></td><td class="v"></td><td colspan="5"></td><td class="v"></td><td></td><td colspan="3"></td><td colspan="5" class="v last"></td><td class="tail"></td></tr>
                    </tbody>
                </table>
            </div>
            <div class="scroll">
                <button class="arrow-up" aria-label="向上滚动"></button>
                <div class="thumb grid-thumb"></div>
                <button class="arrow-down" aria-label="向下滚动"></button>
            </div>
        </div>

        <div class="sheettabs">
            <button aria-label="首页"><svg viewBox="0 0 16 16"><path d="M4 4h2v8H4zM12 4v8L7 8z"/></svg></button>
            <button aria-label="上一页"><svg viewBox="0 0 16 16"><path d="M10 4v8L5 8z"/></svg></button>
            <button aria-label="下一页"><svg viewBox="0 0 16 16"><path d="M6 4v8l5-4z"/></svg></button>
            <button aria-label="末页"><svg viewBox="0 0 16 16"><path d="M10 4h2v8h-2zM4 4v8l5-4z"/></svg></button>
            <div class="sheettab">
                <svg viewBox="0 0 60 17" preserveAspectRatio="none"><path d="M0 0h60l-8 17H8z" fill="#fff"/><path d="M1 0l8 17M59 0l-7 17" stroke="#000" fill="none"/></svg>
                <span>第1页</span>
            </div>
            <div class="rest"></div>
            <button class="resize" aria-label="调整"><svg viewBox="0 0 16 16"><path d="M11 5v6H5z"/></svg></button>
        </div>
    </section>
</main>

<footer class="status">
    <span class="s1">筑业软件-您身边的建筑软件 www.zhuyew.cn</span>
    <span class="s2">当前用户：管理员</span>
    <span class="s3">版本号：10.4.0.132</span>
    <span class="s4"></span>
    <span class="progress">0%</span>
    <span class="clock">2025-7-18 9:34:14</span>
</footer>
<div class="desktop"></div>

<!-- input method bar floats over the window -->
<div class="ime">
    <svg class="logo" viewBox="0 0 32 32"><path d="M1 6L25 1q2 0 3 2l3 21q0 3-3 3L9 31q-3 0-4-3L0 9q0-2 1-3z" fill="url(#sogou)"/><path d="M25 7.500Q8 6 8 12t9 4.500q7 0 5 3.500-3 4.500-15 3" fill="none" stroke="#fff" stroke-width="4.500" stroke-linecap="round"/></svg>
    <b>中</b>
    <svg viewBox="0 0 16 16"><circle cx="4" cy="5" r="2" fill="none" stroke="#0b6fd8" stroke-width="1.500"/><path d="M10 8h4v3q0 3-3 3.500l-.5-1q1.500-.5 1.500-2h-2z" fill="#0b6fd8"/></svg>
    <svg viewBox="0 0 16 16"><rect x="5" y="0" width="6" height="10" rx="3" fill="#0b6fd8"/><path d="M2.500 7q0 5.500 5.500 5.500T13.500 7M8 12v4M5.500 15.500h5" fill="none" stroke="#0b6fd8" stroke-width="1.600"/></svg>
    <svg viewBox="0 0 16 16"><rect x="1" y="2.500" width="14" height="11" rx="1" fill="none" stroke="#0b6fd8" stroke-width="1.500"/><path d="M3 6h10M3 8.500h10" stroke="#0b6fd8" stroke-width="1.500" stroke-dasharray="2 1"/><path d="M4 11.500h8" stroke="#0b6fd8" stroke-width="1.300"/></svg>
    <svg viewBox="0 0 16 16"><path d="M1 4l4-2q2 2 4 0l5 2-1 4h-2v7H4V8H1z" fill="url(#shirt)"/><circle cx="14" cy="2" r="2.500" fill="#f4543a"/></svg>
    <svg viewBox="0 0 16 16"><rect x="1" y="2" width="6" height="6" rx="1.500" fill="#0b6fd8"/><rect x="9.700" y="2.700" width="4.600" height="4.600" rx="1.500" fill="none" stroke="#0b6fd8" stroke-width="1.500"/><rect x="1" y="9.500" width="6" height="6" rx="1.500" fill="#0b6fd8"/><rect x="9" y="9.500" width="6" height="6" rx="1.500" fill="#0b6fd8"/></svg>
    <svg class="face" viewBox="0 0 20 20"><circle cx="10" cy="10" r="9.500" fill="#fff" stroke="#e6dcdc"/><path d="M1 7q7-3 13-2l1 4q-3 3-6 1-4 3-7 1z" fill="#ef5a1c"/><path d="M3 8q3-1 4 1-1 3-4 1zM9 8l3-1 1 2-3 1zM9 14l3-2v2z" fill="#222"/><path d="M17 4l1 3 2 1-2 1-1 3-1-3-2-1 2-1z" fill="#ffd84a"/></svg>
</div>

<script>
    // rows 7-21: five inspection items, three sheet rows each
    const items = [
        { cells: ['中空玻璃', '5mmLOW<br>-E27A+2mm<br>双钢', '1350平米', '河北起红腾达新型建材科技有限公司'], done: true },
        {}, {}, {}, {}
    ];
    const choices = [
        ['符合', '合格', '不需复验'],
        ['', '', '复验合格'],
        ['不符合', '不合格', '复验不合格']
    ];
    const spans = [3, 2, 2, 4];
    let html = '';

    items.forEach((item, i) => {
        choices.forEach((labels, j) => {
            const b = j === 2 ? ' b' : '';
            html += `<tr class="h26"><th>${7 + i * 3 + j}</th><td class="edge"></td>`;
            if (j === 0) {
                html += `<td rowspan="3" class="k">${i + 1}</td>`;
                spans.forEach((span, n) => {
                    html += `<td rowspan="3" colspan="${span}" class="v k">${item.cells ? item.cells[n] : ''}</td>`;
                });
            }
            labels.forEach((text, n) => {
                const id = `c${i}${j}${n}`;
                const edge = n === 2 ? ' last' : ' r';
                const checked = item.done && j === 0 ? ' checked' : '';
                html += `<td colspan="2" class="rt${b}">` + (text ? `<label for="${id}">${text}</label>` : '') + '</td>';
                html += text
                    ? `<td class="c${b}${edge}"><input type="checkbox" id="${id}"${checked}></td>`
                    : `<td class="${b}${edge}"></td>`;
            });
            html += '<td class="tail"></td></tr>';
        });
    });
    document.getElementById('items').innerHTML = html;
</script>

</body>
</html>
```
FILE: styles.css
```css
* {
    box-sizing: border-box;
}
body {
    margin: 0;
    height: 100vh;
    display: flex;
    flex-direction: column;
    overflow: hidden;
    background: #ccd8f0;
    color: #000;
    font-family: "Noto Sans CJK SC", sans-serif;
    font-size: 12px;
    line-height: 14px;
    font-feature-settings: "hwid";
}
button, input, select {
    font: inherit;
    font-feature-settings: inherit;
    color: inherit;
    margin: 0;
    padding: 0;
    border: 0;
    background: none;
    border-radius: 0;
}
button {
    white-space: nowrap;
}
.sprite {
    position: absolute;
    width: 0;
    height: 0;
}
.ic {
    width: 16px;
    height: 16px;
    flex: none;
    display: block;
}
/* full-width punctuation */
.fw {
    font-style: normal;
    font-feature-settings: normal;
}
.sep {
    flex: none;
    width: 4px;
    align-self: stretch;
    margin: 2px 0;
    background: linear-gradient(90deg, transparent 1px, #9a9a9a 1px, #9a9a9a 2px, #fff 2px, #fff 3px, transparent 3px);
}

/* title and menu */
.titlebar {
    height: 14px;
    flex: none;
    display: flex;
    align-items: flex-end;
    overflow: hidden;
    padding-left: 1px;
    background: linear-gradient(#d5dff0, #fff);
    border-bottom: 1px solid #9fb4e0;
    color: #2a4a8c;
    font-feature-settings: normal;
}
.titlebar .ic {
    align-self: center;
}
.caption {
    flex: 1;
    padding-bottom: 1px;
    white-space: nowrap;
}
.winbtns {
    display: flex;
    gap: 3px;
    align-self: flex-start;
}
.winbtns button {
    width: 16px;
    height: 11px;
    border: 1px solid #9fb2d8;
    border-top: 0;
    border-radius: 0 0 4px 4px;
    background: #dfe7f5;
    display: flex;
    justify-content: center;
}
.winbtns svg, .mdibtns svg {
    width: 10px;
    height: 10px;
}
.menubar {
    flex: none;
    height: 19px;
    display: flex;
    align-items: center;
    padding: 0 14px 0 15px;
    gap: 9px;
    background: linear-gradient(#fff, #d3e0f3 45%, #dbe6f6 60%, #fff);
    border-bottom: 1px solid #8a99b8;
    font-feature-settings: normal;
}
.mdibtns {
    margin-left: auto;
    display: flex;
    gap: 9px;
}
.mdibtns button {
    width: 10px;
    height: 10px;
    display: flex;
}

/* main toolbar */
.maintools {
    flex: none;
    height: 38px;
    display: flex;
    padding: 2px 0 0 3px;
    border-left: 2px solid #b4bccb;
    border-top: 1px solid #fff;
    border-bottom: 1px solid #9a9a9a;
}
.maintools button {
    padding: 2px 5px 0;
    min-width: 48px;
    display: flex;
    flex-direction: column;
    align-items: center;
}
.maintools .sep {
    width: 8px;
    margin: 0 0 2px;
    background: linear-gradient(90deg, transparent 3px, #9a9a9a 3px, #9a9a9a 4px, #fff 4px, #fff 5px, transparent 5px);
}
button.drop, .maintools button.drop, .bar button.drop {
    width: 16px;
    min-width: 16px;
    padding: 0;
    align-items: center;
    justify-content: center;
    display: flex;
}
.maintools button.drop {
    height: 28px;
}
.drop::before {
    content: "";
    border: 4px solid transparent;
    border-top: 5px solid #000;
    border-bottom: 0;
}
.drop:disabled::before {
    border-top-color: #9a9a9a;
}

/* workspace */
.workspace {
    flex: 1;
    min-height: 0;
    display: flex;
    padding: 0 2px 4px 0;
    border-top: 1px solid #fff;
}
.side {
    flex: none;
    width: 426px;
    display: flex;
    flex-direction: column;
    padding: 4px 3px 1px 2px;
    border-right: 2px solid #a8b8dc;
    border-top: 2px solid #b2c1e4;
}
.tabs {
    display: flex;
    align-items: flex-end;
    height: 22px;
}
.tabs button {
    height: 18px;
    padding: 0 5px;
    background: #efefef;
    border-right: 1px solid #ddd;
    border-top: 1px solid #fff;
}
.tabs .active {
    height: 21px;
    padding: 0 7px;
    background: #f8f8f8;
}
.page {
    flex: 1;
    min-height: 0;
    display: flex;
    flex-direction: column;
    padding: 3px 4px 6px;
    background: #f8f8f8;
    border-right: 1px solid #ddd;
}
.sidetools {
    flex: none;
    height: 27px;
    display: flex;
    align-items: center;
    padding-left: 4px;
    background: #ccd8f0;
}
.sidetools button {
    width: 23px;
    display: flex;
    justify-content: center;
}
.sidetools .wide {
    width: auto;
    align-items: center;
    gap: 1px;
    padding-left: 6px;
}
.library {
    flex: none;
    height: 20px;
    display: flex;
}
.library input {
    flex: 1;
    min-width: 0;
    background: #fff;
    border: 1px solid #8c8c8c;
    padding: 0 5px;
    font-size: 13px;
    font-feature-settings: normal;
}
.library button {
    width: 65px;
    background: #ccd8f0;
    border: 1px solid #8c8c8c;
}
.treebox {
    flex: 1;
    min-height: 0;
    display: flex;
    background: #fff;
    border: 1px solid #8c8c8c;
    border-width: 1px 0 0 1px;
    overflow: hidden;
}

/* tree */
.tree {
    flex: 1;
    overflow: hidden;
}
.tree, .tree ul {
    margin: 0;
    padding: 0;
    list-style: none;
}
.tree li {
    position: relative;
    padding-left: 19px;
}
.tree li::before {
    content: "";
    position: absolute;
    left: 9px;
    top: 0;
    bottom: 0;
    border-left: 1px dotted #999;
}
.tree li.end::before {
    bottom: auto;
    height: 9px;
}
.tree span {
    height: 18px;
    display: flex;
    align-items: center;
    gap: 4px;
    white-space: nowrap;
}
.tree span::before {
    content: "";
    position: absolute;
    left: 9px;
    top: 9px;
    width: 9px;
    border-top: 1px dotted #999;
}
.tree .plus > span::after, .tree .minus > span::after {
    content: "";
    position: absolute;
    left: 5px;
    top: 5px;
    width: 9px;
    height: 9px;
    border: 1px solid #848484;
    background: linear-gradient(#000, #000) center / 5px 1px no-repeat, #fff;
}
.tree .plus > span::after {
    background: linear-gradient(#000, #000) center / 5px 1px no-repeat, linear-gradient(#000, #000) center / 1px 5px no-repeat, #fff;
}
.tree b {
    font-weight: normal;
}
.tree em {
    width: 16px;
    text-align: center;
    font-style: normal;
    font-weight: bold;
    font-size: 11px;
    color: #0a7a1e;
}
.tree em.red {
    color: #f00;
}
.tree .selected {
    flex: 1;
    height: 18px;
    line-height: 18px;
    padding-left: 1px;
    margin-left: -1px;
    background: #9c9ca0;
    color: #fff;
    outline: 1px dotted #555;
    outline-offset: -1px;
}

/* scroll bars */
.scroll {
    flex: none;
    width: 17px;
    display: flex;
    flex-direction: column;
    background: repeating-conic-gradient(#e4e4e4 0 25%, #fff 0 50%) 0 0 / 2px 2px;
}
.scroll button, .thumb {
    flex: none;
    background: #efefef;
    border: 1px solid #fff;
    border-right-color: #888;
    border-bottom-color: #888;
}
.scroll button {
    height: 17px;
    display: flex;
    align-items: center;
    justify-content: center;
}
.arrow-up::before, .arrow-down::before {
    content: "";
    border: 4px solid transparent;
    border-bottom: 4px solid #000;
    border-top: 0;
}
.arrow-down::before {
    border-top: 4px solid #000;
    border-bottom: 0;
}
.scroll .arrow-down {
    margin-top: auto;
}
.tree-thumb {
    height: 30%;
}
.grid-thumb {
    height: 78%;
}

.hgrip {
    flex: none;
    height: 9px;
    display: flex;
    justify-content: center;
}
.hgrip i {
    width: 161px;
    height: 8px;
    margin-top: 1px;
    border: 1px solid #9aa8c8;
    border-bottom: 0;
    border-radius: 4px 4px 0 0;
    background: linear-gradient(90deg, transparent 71px, #ccd8f0 71px, #ccd8f0 89px, transparent 89px), radial-gradient(circle, #8f9dc0 1px, transparent 2px) 2px 0 / 5px 6px, #ccd8f0;
}
.samples {
    flex: none;
    height: 127px;
    background: #fff;
    border: 1px solid #8c8c8c;
}
.samples h2 {
    margin: 0;
    display: flex;
    justify-content: center;
    gap: 48px;
    font-size: 12px;
    font-weight: normal;
    height: 16px;
    line-height: 16px;
}
.samples p {
    margin: 0;
    display: flex;
    align-items: center;
    gap: 4px;
    height: 18px;
}

.splitter {
    flex: none;
    width: 10px;
    display: flex;
    align-items: center;
    justify-content: center;
    border-right: 1px solid #a8b8dc;
}
.splitter i {
    width: 8px;
    height: 39%;
    display: flex;
    align-items: center;
    justify-content: center;
    border: 1px solid #9aa8c8;
    border-radius: 4px;
    background: radial-gradient(circle, #9aa4b8 1px, transparent 2px) 0 0 / 6px 5px, #ccd8f0;
}
.splitter svg {
    width: 6px;
    height: 10px;
    background: #ccd8f0;
}

/* editor */
.editor {
    flex: 1;
    min-width: 0;
    display: flex;
    flex-direction: column;
    padding: 5px 2px 0 3px;
    border-top: 1px solid #a8b8dc;
}
.bar {
    flex: none;
    height: 24px;
    display: flex;
    align-items: center;
    padding-left: 12px;
    border: 1px solid #9a9a9a;
    border-bottom: 0;
    background: linear-gradient(90deg, transparent 4px, #fff 4px, #fff 5px, #9a9a9a 5px, #9a9a9a 6px, transparent 6px) 0 4px / 100% 17px no-repeat;
    box-shadow: inset 0 1px #fff;
}
.bar.second {
    height: 26px;
    border-bottom: 1px solid #9a9a9a;
    padding-bottom: 1px;
}
.bar.third {
    height: 26px;
    border-bottom: 1px solid #9a9a9a;
    gap: 6px;
}
.bar button {
    height: 22px;
    display: flex;
    align-items: center;
    justify-content: center;
}
.first button {
    width: 26px;
}
.second button {
    width: 25px;
}
.bar button:disabled {
    color: #a0a0a0;
    text-shadow: 1px 1px #fff;
}
.third button {
    gap: 2px;
    padding-left: 3px;
}
.third .gapl {
    margin-left: 11px;
}
.sep.big {
    width: 8px;
}
.glyph {
    font-family: "Liberation Serif", serif;
    font-size: 16px;
    font-feature-settings: normal;
}
.bar .on {
    background: repeating-conic-gradient(#ccd8f0 0 25%, #fff 0 50%) 0 0 / 2px 2px content-box;
    padding: 0 2px;
}
.bar .pressed {
    border: 1px solid #9a9a9a;
    padding: 0;
}
.bar .hover .ic {
    background: #c4c4c4;
}
.num {
    font-family: "Liberation Serif", serif;
    font-size: 14px;
    font-feature-settings: normal;
}
.no {
    font-size: 14px;
}
.combo {
    height: 18px;
    display: flex;
    align-items: center;
    border: 1px solid #9a9a9a;
    position: relative;
}
.combo select {
    flex: 1;
    min-width: 0;
    height: 16px;
    padding: 0 2px;
    appearance: none;
    color: #999;
    opacity: 1;
}
.combo::after {
    content: "";
    position: absolute;
    right: 5px;
    top: 6px;
    border: 4px solid transparent;
    border-top: 4px solid #9a9a9a;
    border-bottom: 0;
}
.combo.font {
    width: 90px;
    background: #efefef;
    padding-left: 4px;
}
.combo.font b {
    font-family: "Liberation Serif", serif;
}
.combo.font .low {
    margin-left: -3px;
    padding-top: 3px;
}
.combo.size {
    width: 59px;
    background: #efefef;
}
.combo.zoom {
    width: 67px;
    background: #fff;
}
.combo.zoom select {
    color: #000;
}
.combo.zoom::after {
    border-top-color: #000;
}
.combo.line {
    width: 80px;
    background: #efefef;
}
.combo hr {
    width: 54px;
    flex: none;
    margin: 0 0 0 5px;
    border: 0;
    border-top: 1px solid #9a9a9a;
}

/* sheet */
.gridbox {
    flex: 1;
    min-height: 0;
    display: flex;
    border: 1px solid #666;
    border-bottom: 0;
    border-left: 0;
    border-right: 2px solid #777;
    background: #efefef;
}
.grid {
    flex: 1;
    min-width: 0;
    overflow: hidden;
    border-left: 1px solid #666;
}
.sheet {
    width: 749px;
    table-layout: fixed;
    border-collapse: separate;
    border-spacing: 0;
    font-size: 14px;
    line-height: 14px;
}
.w5 { width: 5px; }
.w6 { width: 6px; }
.w28 { width: 28px; }
.w30 { width: 30px; }
.w32 { width: 32px; }
.w33 { width: 33px; }
.w34 { width: 34px; }
.w37 { width: 37px; }
.w39 { width: 39px; }
.w40 { width: 40px; }
.h5 { height: 5px; }
.h26 { height: 26px; }
.h32 { height: 32px; }
.h33 { height: 33px; }
.h35 { height: 35px; }
.h38 { height: 38px; }
.h41 { height: 41px; }
.h43 { height: 43px; }
.h52 { height: 52px; }
.sheet th {
    padding: 0;
    background: #efefef;
    border-right: 1px solid #8c8c8c;
    border-bottom: 1px solid #8c8c8c;
    box-shadow: inset 1px 1px #fff;
    font-family: "Liberation Serif", serif;
    font-feature-settings: normal;
    font-weight: bold;
}
.sheet thead th {
    height: 19px;
    font-weight: normal;
}
.sheet thead .corner {
    background: repeating-linear-gradient(135deg, #999 0 1px, #efefef 1px 3px) 100% 100% / 10px 10px no-repeat, #efefef;
}
.sheet tbody th {
    border-right: 0;
    border-bottom-color: #aca899;
}
.sheet td {
    padding: 0 1px 2px;
    background: #dedede;
    border-right: 1px solid #efefef;
    border-bottom: 1px solid #efefef;
    text-align: center;
    vertical-align: middle;
}
.sheet td.edge {
    padding: 0;
    background: #efefef;
    border-left: 2px solid #222;
    border-right: 1px solid #000;
    border-bottom: 0;
}
.sheet td.tail {
    padding: 0;
    border: 0;
}
.sheet td.top {
    border-bottom: 2px solid #000;
    border-right: 2px solid #000;
    padding: 0;
}
.sheet td.v {
    background: #fff;
    color: #222;
    font-weight: 300;
}
.sheet td.peach {
    background: #f0c8a5;
}
.sheet td.c {
    background: #fff;
    text-align: left;
    padding: 0 0 0 2px;
}
.sheet td.lt {
    text-align: left;
}
.sheet td.rt {
    text-align: right;
    padding-right: 2px;
}
.sheet td.k, .sheet td.b {
    border-bottom-color: #000;
}
.sheet td.k, .sheet td.r {
    border-right-color: #000;
}
.sheet td.last {
    border-right: 2px solid #000;
}
.sheet td.title {
    font-size: 23px;
    font-weight: bold;
    line-height: 26px;
}
.sheet td.subtitle {
    font-size: 17px;
    font-weight: bold;
    line-height: 18px;
    vertical-align: top;
}
.sheet input {
    appearance: none;
    display: block;
    width: 15px;
    height: 15px;
    border: 2px solid #666;
    background: #fff;
}
.sheet input:checked::before {
    content: "";
    display: block;
    width: 7px;
    height: 4px;
    margin: 2px;
    border-left: 2px solid #000;
    border-bottom: 2px solid #000;
    transform: rotate(-45deg);
}

/* sheet tabs */
.sheettabs {
    flex: none;
    height: 18px;
    display: flex;
    background: #efefef;
    border: 1px solid #666;
    border-top: 0;
    border-right: 2px solid #777;
}
.sheettabs button {
    width: 17px;
    border: 1px solid #999;
    border-left-color: #fff;
    display: flex;
}
.sheettabs button svg {
    width: 15px;
    height: 15px;
}
.sheettab {
    width: 60px;
    position: relative;
}
.sheettab svg {
    position: absolute;
    width: 60px;
    height: 17px;
}
.sheettab span {
    position: relative;
    display: block;
    text-align: center;
    line-height: 17px;
}
.rest {
    flex: 1;
    border-top: 1px solid #999;
}

/* status */
.status {
    flex: none;
    height: 20px;
    display: flex;
    gap: 3px;
    padding: 1px 0 0;
    border-top: 1px solid #a8b8dc;
    background: #ccd8f0;
}
.status span {
    border: 1px solid #a8a8a8;
    border-bottom: 0;
    border-right-color: #fff;
    padding: 0 4px;
    line-height: 16px;
    white-space: nowrap;
}
.status .s1 {
    width: 274px;
    border-left: 0;
    padding-left: 2px;
}
.status .s2 {
    width: 125px;
}
.status .s3 {
    width: 130px;
}
.status .s4 {
    width: 98px;
}
.status .progress {
    flex: 1;
    text-align: center;
    background: #efefef;
    color: #0b6fd8;
}
.status .clock {
    width: 196px;
    text-align: right;
    padding-right: 2px;
}
.desktop {
    flex: none;
    height: 8px;
    background: linear-gradient(90deg, #dcecb8, #d8ecb4 30%, #d8e2c4 55%, #dcecb8);
}

/* input method bar */
.ime {
    position: absolute;
    right: 0;
    bottom: 102px;
    width: 201px;
    height: 27px;
    display: flex;
    align-items: center;
    gap: 8px;
    background: linear-gradient(90deg, transparent 8px, #fff 8px);
    border-top: 1px solid #b4cbe8;
    border-bottom: 1px solid #b4cbe8;
}
.ime svg {
    width: 16px;
    height: 16px;
    flex: none;
}
.ime .logo {
    width: 31px;
    height: 31px;
    margin-right: -3px;
}
.ime b {
    width: 16px;
    font-size: 15px;
    color: #0b6fd8;
}
.ime .face {
    width: 20px;
    height: 20px;
    margin-left: -2px;
}
```
